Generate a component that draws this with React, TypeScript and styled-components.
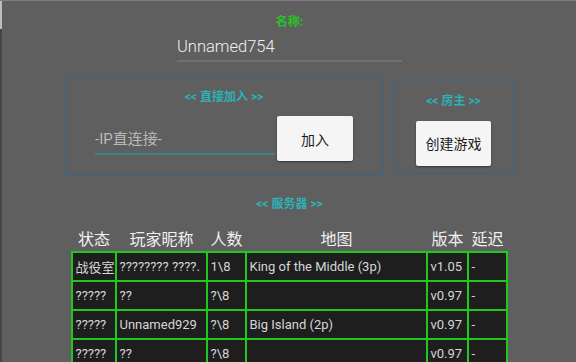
import styled, { createGlobalStyle } from 'styled-components'

const GlobalStyle = createGlobalStyle`
  html, body {
    margin: 0;
    padding: 0;
    height: 100%;
    overflow: hidden;
    background: #5f5f5f;
  }
  #root {
    height: 100%;
  }
`

const FONT = `Roboto, "Noto Sans CJK SC", "Noto Sans", sans-serif`

const Screen = styled.div`
  box-sizing: border-box;
  min-height: 100%;
  padding: 14px 0 0 3px;
  display: flex;
  flex-direction: column;
  align-items: center;
  font-family: ${FONT};
  border-top: 1px solid #7c7c7c;
  background:
    linear-gradient(to bottom, #bdbdbd 0 28px, #46473d 28px) left top / 2px 100% no-repeat,
    #5f5f5f;

  & > * {
    flex-shrink: 0;
  }
`

const SectionTitle = styled.div<{ $tone: 'green' | 'teal' }>`
  font-size: 12px;
  line-height: 14px;
  font-weight: 700;
  color: ${({ $tone }) => ($tone === 'green' ? '#1fc91f' : '#2bb2b4')};
  white-space: nowrap;
  text-align: center;
`

const NameField = styled.div`
  box-sizing: border-box;
  width: 225px;
  height: 29px;
  margin-top: 4px;
  display: flex;
  align-items: center;
  font-size: 16.5px;
  font-weight: 300;
  color: #f0f0f0;
  border-bottom: 2px solid #717171;
`

const PanelRow = styled.div`
  margin-top: 14px;
  display: flex;
  align-items: center;
  gap: 9px;
`

const Panel = styled.div<{ $w: number; $h: number; $pt: number }>`
  box-sizing: border-box;
  width: ${({ $w }) => $w}px;
  height: ${({ $h }) => $h}px;
  padding-top: ${({ $pt }) => $pt}px;
  border: 2px solid #4b6274;
  display: flex;
  flex-direction: column;
  align-items: center;
`

const JoinRow = styled.div`
  margin-top: 12px;
  display: flex;
  align-items: center;
  gap: 2px;
`

const IpInput = styled.div`
  box-sizing: border-box;
  width: 180px;
  height: 33px;
  display: flex;
  align-items: center;
  font-size: 15px;
  color: #b9b9b9;
  border-bottom: 2px solid #3d8384;
`

const ActionButton = styled.button<{ $w: number; $mt?: number }>`
  width: ${({ $w }) => $w}px;
  height: 45px;
  margin-top: ${({ $mt }) => $mt ?? 0}px;
  padding: 0;
  border: none;
  border-radius: 2px;
  background: #f5f5f5;
  box-shadow: 0 1px 2px rgba(0, 0, 0, 0.45);
  font-family: ${FONT};
  font-size: 14px;
  color: #1c1c1c;
`

const ServerTitle = styled(SectionTitle)`
  margin-top: 21px;
`

const COLS = '42px 89px 37px 179px 39px 37px'

const HeaderRow = styled.div`
  margin-top: 14px;
  height: 26px;
  padding: 0 2px;
  display: grid;
  grid-template-columns: ${COLS};
  column-gap: 2px;
  align-items: center;
`

const HeaderCell = styled.div`
  font-size: 16px;
  color: #f0f0f0;
  text-align: center;
  white-space: nowrap;
`

const Grid = styled.div`
  display: grid;
  grid-template-columns: ${COLS};
  grid-auto-rows: 27px;
  gap: 2px;
  padding: 2px;
  background: #1fc71f;
`

const Cell = styled.div`
  padding: 0 2px 0 2.5px;
  display: flex;
  align-items: center;
  overflow: hidden;
  white-space: nowrap;
  background: #1e1e1e;
  font-size: 13px;
  color: #d6d6d6;
`

const headers = ['状态', '玩家昵称', '人数', '地图', '版本', '延迟']

const rows = [
  ['战役室', '???????? ????.', '1\\8', 'King of the Middle (3p)', 'v1.05', '-'],
  ['?????', '??', '?\\8', '', 'v0.97', '-'],
  ['?????', 'Unnamed929', '?\\8', 'Big Island (2p)', 'v0.97', '-'],
  ['?????', '??', '?\\8', '', 'v0.97', '-'],
]

export default function App() {
  return (
    <>
      <GlobalStyle />
      <Screen>
        <SectionTitle $tone="green">名称:</SectionTitle>
        <NameField>Unnamed754</NameField>

        <PanelRow>
          <Panel $w={319} $h={100} $pt={12}>
            <SectionTitle $tone="teal">{'<< 直接加入 >>'}</SectionTitle>
            <JoinRow>
              <IpInput>-IP直连接-</IpInput>
              <ActionButton $w={76}>加入</ActionButton>
            </JoinRow>
          </Panel>
          <Panel $w={122} $h={95} $pt={13}>
            <SectionTitle $tone="teal">{'<< 房主 >>'}</SectionTitle>
            <ActionButton $w={75} $mt={13}>
              创建游戏
            </ActionButton>
          </Panel>
        </PanelRow>

        <ServerTitle $tone="teal">{'<< 服务器 >>'}</ServerTitle>

        <HeaderRow>
          {headers.map(h => (
            <HeaderCell key={h}>{h}</HeaderCell>
          ))}
        </HeaderRow>
        <Grid>
          {rows.map((row, r) =>
            row.map((value, c) => <Cell key={`${r}-${c}`}>{value}</Cell>),
          )}
        </Grid>
      </Screen>
    </>
  )
}
